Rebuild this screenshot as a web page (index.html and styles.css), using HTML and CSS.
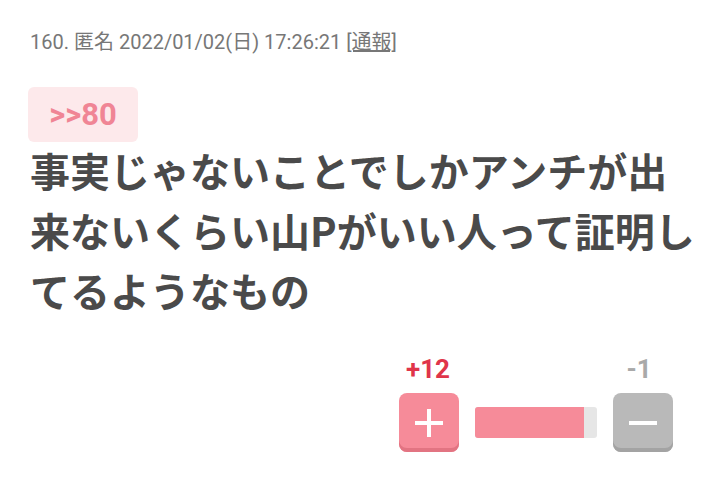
FILE: index.html
```html
<!DOCTYPE html>
<html lang="ja">
<head>
    <meta charset="UTF-8">
    <meta name="viewport" content="width=device-width, initial-scale=1.0">
    <title>160. 匿名</title>
    <link rel="stylesheet" href="styles.css">
</head>
<body>
    <div class="comment">
        <div class="comment-head">160. 匿名 2022/01/02(日) 17:26:21 <a href="#" class="report">[通報]</a></div>
        <div class="anchor">&gt;&gt;80</div>
        <p class="comment-body">事実じゃないことでしかアンチが出来ないくらい山Pがいい人って証明してるようなもの</p>

        <div class="vote">
            <div class="vote-col">
                <span class="count plus">+12</span>
                <button class="vote-btn btn-plus" aria-label="plus">
                    <svg width="30" height="30" viewBox="0 0 30 30"><path d="M15 1v28M1 15h28" stroke="#fff" stroke-width="4"/></svg>
                </button>
            </div>
            <div class="ratio"><div class="ratio-fill" style="width: 89%"></div></div>
            <div class="vote-col">
                <span class="count minus">-1</span>
                <button class="vote-btn btn-minus" aria-label="minus">
                    <svg width="30" height="30" viewBox="0 0 30 30"><path d="M1 15h28" stroke="#fff" stroke-width="4"/></svg>
                </button>
            </div>
        </div>
    </div>
</body>
</html>
```

FILE: styles.css
```css
body {
    margin: 0;
    background: #fff;
    font-family: Roboto, "Noto Sans CJK JP", sans-serif;
    color: #4a4a4a;
}
.comment {
    padding: 30px 4px 0 30px;
}
.comment-head {
    font-size: 20px;
    line-height: 24px;
    color: #777;
}
.report {
    color: #777;
    text-decoration: underline;
}
.anchor {
    display: inline-block;
    margin-top: 33px;
    margin-left: -2px;
    width: 110px;
    height: 55px;
    line-height: 55px;
    text-align: center;
    border-radius: 6px;
    background: #fde9eb;
    color: #f08595;
    font-size: 31px;
    font-weight: bold;
}
.comment-body {
    margin: -2px 0 0;
    font-family: "Noto Sans CJK JP", sans-serif;
    font-size: 40px;
    line-height: 60px;
    font-weight: bold;
    color: #4a4a4a;
}
.vote {
    display: flex;
    justify-content: flex-end;
    align-items: flex-end;
    margin-top: 34px;
    margin-right: 25px;
}
.vote-col {
    display: flex;
    flex-direction: column;
    align-items: center;
}
.count {
    font-size: 26px;
    font-weight: bold;
    line-height: 30px;
    margin-bottom: 9px;
}
.count.plus {
    color: #e0354a;
    margin-left: -2px;
}
.count.minus {
    color: #a9a9a9;
    margin-left: -8px;
}
.vote-btn {
    width: 60px;
    height: 59px;
    padding: 0;
    border: none;
    border-radius: 8px;
    display: flex;
    align-items: center;
    justify-content: center;
}
.btn-plus {
    background: #f68b99;
    box-shadow: inset 0 -4px 0 #e27482;
}
.btn-minus {
    background: #b9b9b9;
    box-shadow: inset 0 -4px 0 #a3a3a3;
}
.ratio {
    width: 122px;
    height: 31px;
    margin: 0 16px 14px;
    background: #e6e6e6;
    border-radius: 3px;
    overflow: hidden;
}
.ratio-fill {
    height: 100%;
    background: #f68b99;
}
```
